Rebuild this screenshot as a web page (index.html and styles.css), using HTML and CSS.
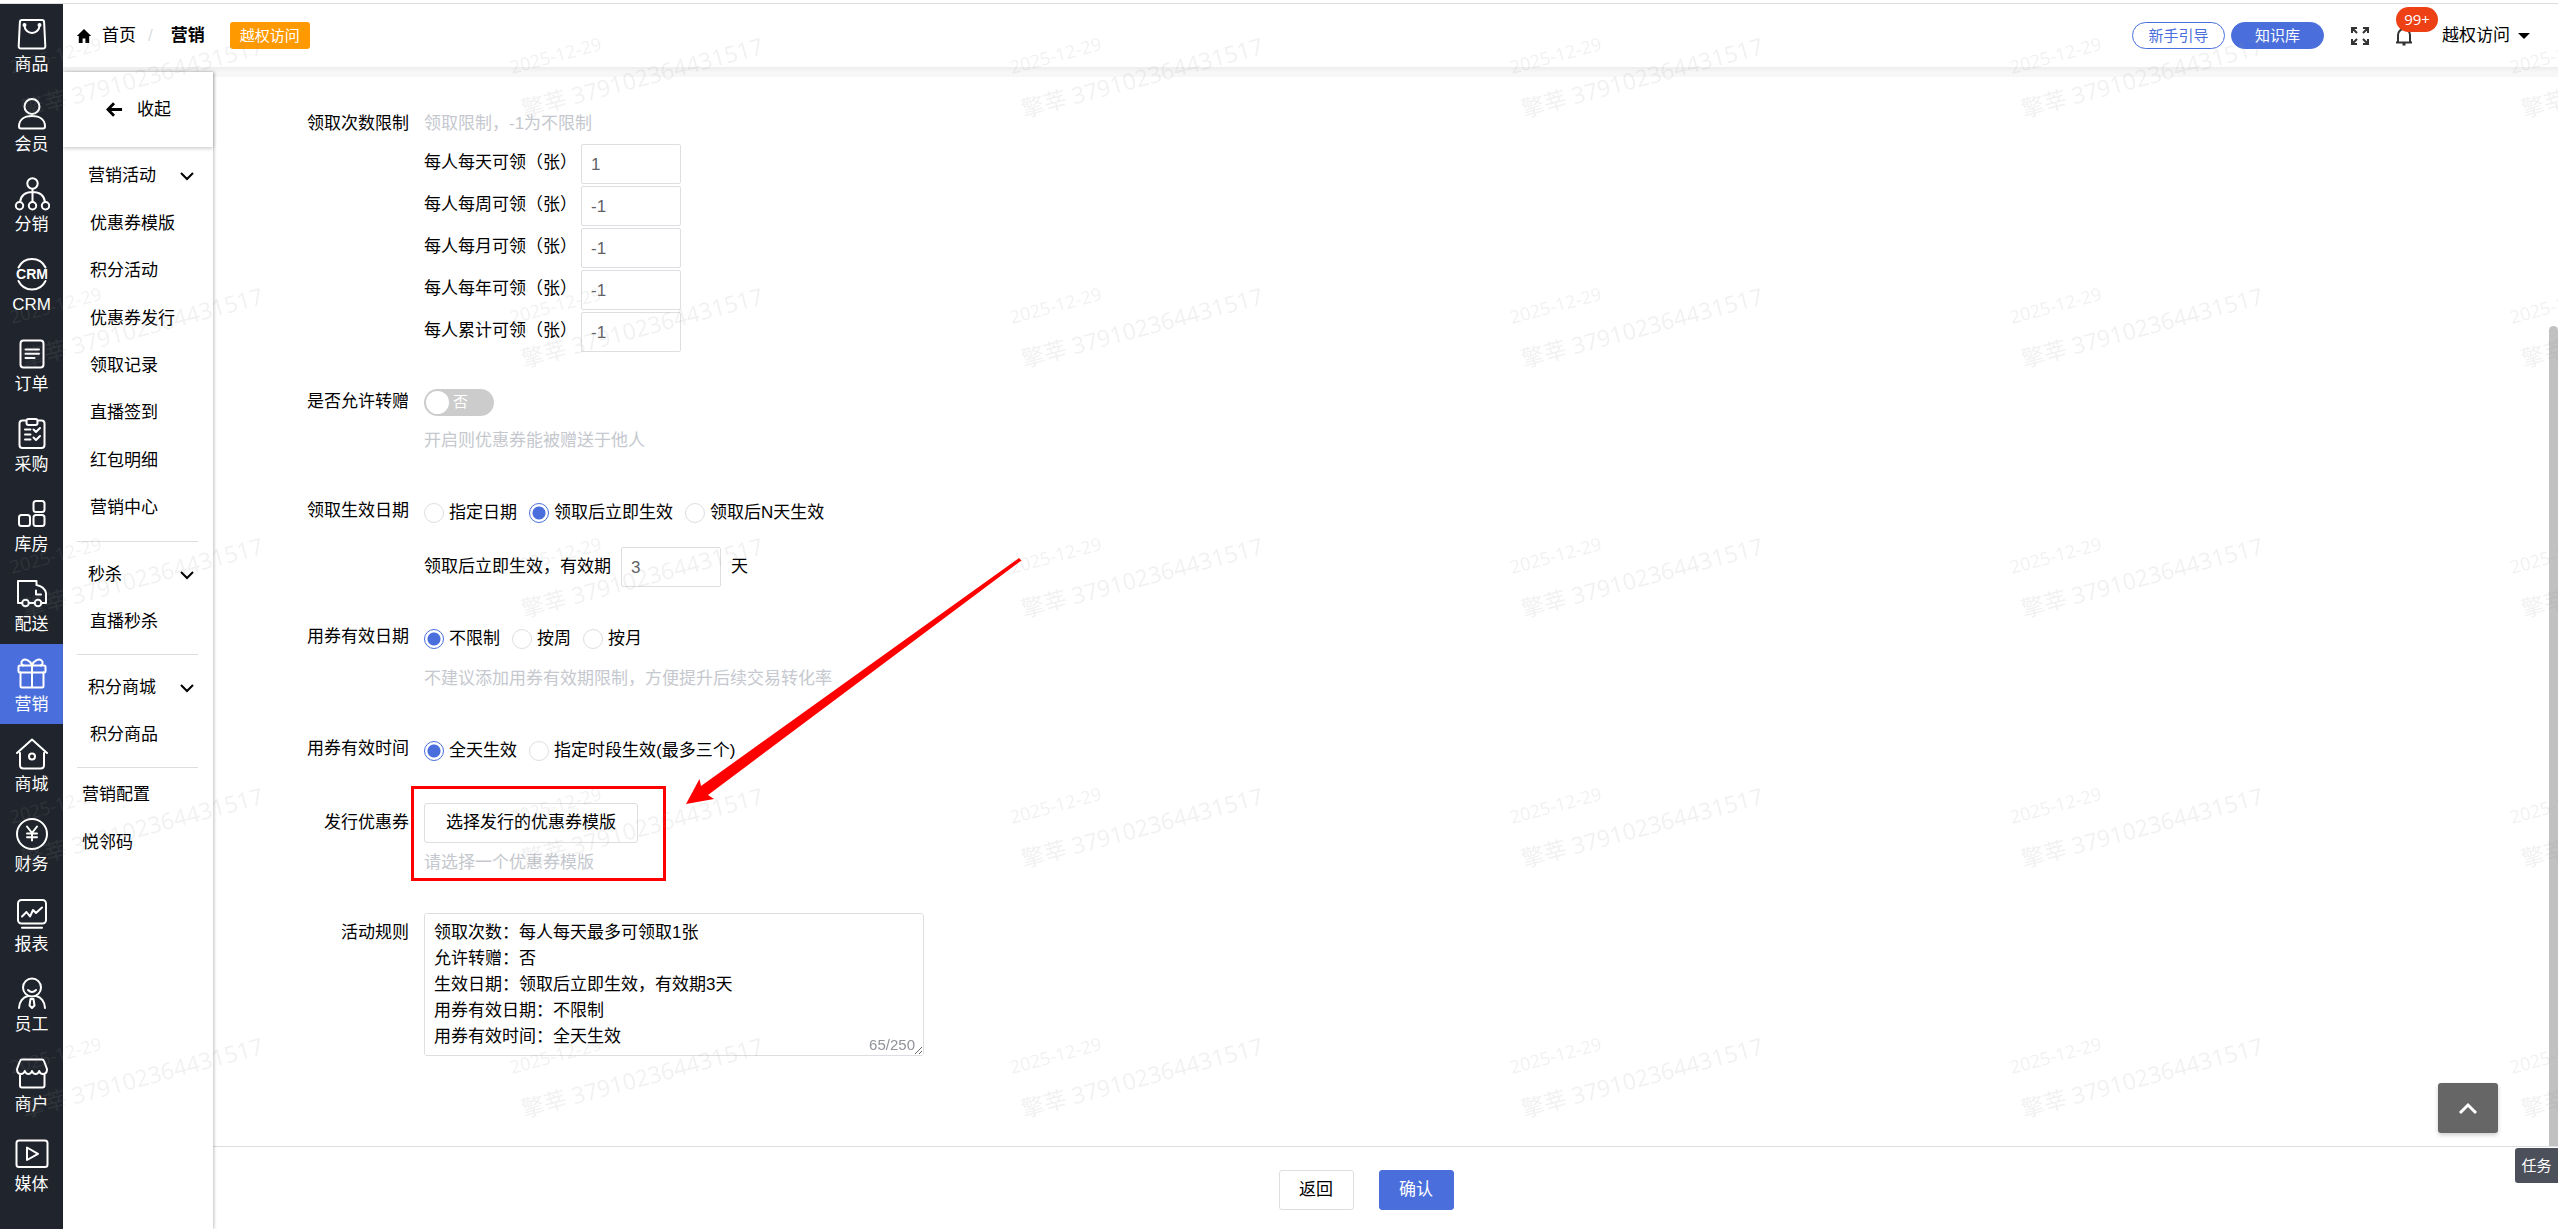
FILE: index.html
```html
<!DOCTYPE html>
<html lang="zh-CN">
<head>
<meta charset="utf-8">
<meta name="viewport" content="width=device-width, initial-scale=1">
<title>营销 - 优惠券发行</title>
<link rel="stylesheet" href="styles.css">
</head>
<body>
<div class="app">
  <nav class="rail" aria-label="主导航">
    <a class="rail-item" href="#"><svg class="rail-icon" viewBox="0 0 36 36"><path d="M8 4h20q2 0 2.100 2l1.200 24q.1 2.500-2.300 2.500H7Q4.600 32.500 4.700 30L5.900 6Q6 4 8 4z"/><path d="M10.500 9.500a7.500 7.500 0 0 0 15 0"/><circle class="solid" cx="10.500" cy="9" r="1"/><circle class="solid" cx="25.500" cy="9" r="1"/></svg>商品</a>
    <a class="rail-item" href="#"><svg class="rail-icon" viewBox="0 0 36 36"><circle cx="18" cy="10.500" r="7.500"/><path d="M5 30.500C5 24 10 20 18 20s13 4 13 10.500q0 2-2 2H7q-2 0-2-2z"/></svg>会员</a>
    <a class="rail-item" href="#"><svg class="rail-icon" viewBox="0 0 36 36"><circle cx="18.500" cy="7.500" r="5.200"/><circle cx="5.500" cy="29.700" r="3.700"/><circle cx="18.500" cy="29.700" r="3.700"/><circle cx="31.500" cy="29.700" r="3.700"/><path d="M18.500 13v13M6 26c1-7 6-10 12.500-10S30 19 31 26"/></svg>分销</a>
    <a class="rail-item" href="#"><svg class="rail-icon" viewBox="0 0 36 36"><path d="M4.500 11.500a15 15 0 0 1 27 0M4.500 25a15 15 0 0 0 27 0"/><text class="icon-word" x="18" y="23" text-anchor="middle">CRM</text></svg>CRM</a>
    <a class="rail-item" href="#"><svg class="rail-icon" viewBox="0 0 36 36"><rect x="6.500" y="4.500" width="23" height="27" rx="3"/><path d="M11.500 13.500h13.500M11.500 17.700h13.500M11.500 22h9"/></svg>订单</a>
    <a class="rail-item" href="#"><svg class="rail-icon" viewBox="0 0 36 36"><path d="M12 4.500H8.500q-3 0-3 3V29q0 3 3 3h19q3 0 3-3V7.500q0-3-3-3H24"/><rect x="12.500" y="3" width="11" height="6" rx="2"/><path d="M11 13.500h5.500M11 18.500h5.500M11 23.500h5.500M19.500 13.500l2.500 2.500 4-4M19.500 21.500l2.500 2.500 4-4"/></svg>采购</a>
    <a class="rail-item" href="#"><svg class="rail-icon" viewBox="0 0 36 36"><rect x="19.500" y="5" width="11" height="11" rx="2.500"/><rect x="5" y="19" width="11" height="11" rx="2.500"/><rect x="19.500" y="19" width="11" height="11" rx="2.500"/></svg>库房</a>
    <a class="rail-item" href="#"><svg class="rail-icon" viewBox="0 0 36 36"><path d="M8 27H4V5h18.500v4c5 1 8.500 4 9.500 8v10h-4.500M15 27h5.500"/><path d="M22 14.500v4h5"/><circle cx="11.500" cy="27" r="3.300"/><circle cx="24" cy="27" r="3.300"/></svg>配送</a>
    <a class="rail-item is-active" href="#" aria-current="page"><svg class="rail-icon" viewBox="0 0 36 36"><rect x="4.500" y="9.500" width="27" height="7" rx="1.500"/><path d="M6.500 16.500V30q0 1.500 1.500 1.500h20q1.500 0 1.500-1.500V16.500M18 9.500v22M18 9.500C16 4 11 2.500 8.500 4.500S8 9 9.500 9.500M18 9.500C20 4 25 2.500 27.500 4.500S28 9 26.500 9.500"/></svg>营销</a>
    <a class="rail-item" href="#"><svg class="rail-icon" viewBox="0 0 36 36"><path d="M3 17L18 3.500 33 17M6 17v12q0 3.500 3.500 3.500h17q3.500 0 3.500-3.500V17"/><circle cx="18" cy="20.500" r="3"/></svg>商城</a>
    <a class="rail-item" href="#"><svg class="rail-icon" viewBox="0 0 36 36"><circle cx="18" cy="18" r="15"/><path d="M13 10.500l5 6.500 5-6.500M18 17v7.500M13 17.500h10M13 21.300h10"/></svg>财务</a>
    <a class="rail-item" href="#"><svg class="rail-icon" viewBox="0 0 36 36"><rect x="4" y="4" width="28" height="23.500" rx="3.500"/><path d="M8 20.500l4.500-4.500 3.500 4.500 3-6.500 3 3 6-5.500M8 31.700h20"/></svg>报表</a>
    <a class="rail-item" href="#"><svg class="rail-icon" viewBox="0 0 36 36"><circle cx="18" cy="11.500" r="9"/><path d="M14 14q4 4 8 0M5 32c0-6 4-11 9-12M31 32c0-6-4-11-9-12M16.500 23h3l1 6.500-2.500 2.500-2.500-2.500z"/></svg>员工</a>
    <a class="rail-item" href="#"><svg class="rail-icon" viewBox="0 0 36 36"><path d="M8 3.500h20q1.500 0 2 1.500l3 8q0 5-4 5-3 0-3.800-3-1 3-3.600 3t-3.600-3q-1 3-3.600 3t-3.600-3q-1 3-3.800 3-4 0-4-5l3-8q.5-1.500 2-1.500zM6 18v11.500q0 2 2 2h20.500q2 0 2-2V18"/></svg>商户</a>
    <a class="rail-item" href="#"><svg class="rail-icon" viewBox="0 0 36 36"><rect x="2.500" y="4.500" width="31" height="26.500" rx="2.500"/><path d="M13 11.500v12.500l11-6.200z"/></svg>媒体</a>
  </nav>

  <div class="workspace">
    <header class="topbar">
      <div class="crumbs">
        <svg class="home-icon" viewBox="0 0 16 16"><path d="M8 1L.8 8h2v7h3.800v-4.500h2.800V15h3.800V8h2z"/></svg>
        <a href="#">首页</a>
        <span class="slash">/</span>
        <strong>营销</strong>
        <span class="tag">越权访问</span>
      </div>
      <div class="tools">
        <button class="pill" type="button">新手引导</button>
        <button class="pill pill-solid" type="button">知识库</button>
        <button class="icon-btn expand" type="button" aria-label="全屏"><svg viewBox="0 0 20 20"><path d="M2 7V2h5M2 2l5 5M13 2h5v5M18 2l-5 5M2 13v5h5M2 18l5-5M18 13v5h-5M18 18l-5-5"/></svg></button>
        <button class="icon-btn bell" type="button" aria-label="消息"><svg viewBox="0 0 20 20"><path d="M2 16.500h16M4 16V9a6 6 0 0 1 12 0v7M8.500 18.500h3"/></svg><span class="badge">99+</span></button>
        <button class="account" type="button">越权访问<span class="caret"></span></button>
      </div>
    </header>

    <div class="body">
      <aside class="side">
        <button class="collapse" type="button"><svg viewBox="0 0 18 18"><path d="M17 9H2M8.500 2.500L2 9l6.500 6.500"/></svg>收起</button>
        <section class="group">
          <button class="group-head" type="button">营销活动<svg viewBox="0 0 16 16"><path d="M2 5l6 6 6-6"/></svg></button>
          <ul class="links links-long">
            <li><a href="#">优惠券模版</a></li>
            <li><a href="#">积分活动</a></li>
            <li><a href="#">优惠券发行</a></li>
            <li><a href="#">领取记录</a></li>
            <li><a href="#">直播签到</a></li>
            <li><a href="#">红包明细</a></li>
            <li><a href="#">营销中心</a></li>
          </ul>
        </section>
        <section class="group">
          <button class="group-head" type="button">秒杀<svg viewBox="0 0 16 16"><path d="M2 5l6 6 6-6"/></svg></button>
          <ul class="links"><li><a href="#">直播秒杀</a></li></ul>
        </section>
        <section class="group">
          <button class="group-head" type="button">积分商城<svg viewBox="0 0 16 16"><path d="M2 5l6 6 6-6"/></svg></button>
          <ul class="links"><li><a href="#">积分商品</a></li></ul>
        </section>
        <ul class="links plain">
          <li><a href="#">营销配置</a></li>
          <li><a href="#">悦邻码</a></li>
        </ul>
      </aside>

      <main class="main">
        <form class="form">
          <div class="field">
            <span class="label">领取次数限制</span>
            <div class="control">
              <p class="hint">领取限制，-1为不限制</p>
              <div class="limits">
                <label for="day">每人每天可领（张）</label><input id="day" class="box" type="text" value="1">
                <label for="week">每人每周可领（张）</label><input id="week" class="box" type="text" value="-1">
                <label for="month">每人每月可领（张）</label><input id="month" class="box" type="text" value="-1">
                <label for="year">每人每年可领（张）</label><input id="year" class="box" type="text" value="-1">
                <label for="total">每人累计可领（张）</label><input id="total" class="box" type="text" value="-1">
              </div>
            </div>
          </div>

          <div class="field wide-gap">
            <label class="label" for="gift">是否允许转赠</label>
            <div class="control">
              <span class="switch"><input id="gift" type="checkbox" role="switch"><span class="switch-text">否</span></span>
              <p class="hint">开启则优惠券能被赠送于他人</p>
            </div>
          </div>

          <div class="field">
            <span class="label">领取生效日期</span>
            <div class="control">
              <div class="radios">
                <label><input type="radio" name="start">指定日期</label>
                <label><input type="radio" name="start" checked>领取后立即生效</label>
                <label><input type="radio" name="start">领取后N天生效</label>
              </div>
              <div class="inline">
                <label for="days">领取后立即生效，有效期</label>
                <input id="days" class="box" type="text" value="3">
                <span class="unit">天</span>
              </div>
            </div>
          </div>

          <div class="field wide-gap">
            <span class="label">用券有效日期</span>
            <div class="control">
              <div class="radios">
                <label><input type="radio" name="date" checked>不限制</label>
                <label><input type="radio" name="date">按周</label>
                <label><input type="radio" name="date">按月</label>
              </div>
              <p class="hint">不建议添加用券有效期限制，方便提升后续交易转化率</p>
            </div>
          </div>

          <div class="field">
            <span class="label">用券有效时间</span>
            <div class="control">
              <div class="radios">
                <label><input type="radio" name="time" checked>全天生效</label>
                <label><input type="radio" name="time">指定时段生效(最多三个)</label>
              </div>
            </div>
          </div>

          <div class="field tall">
            <span class="label">发行优惠券</span>
            <div class="control">
              <button class="btn pick" type="button">选择发行的优惠券模版</button>
              <p class="hint">请选择一个优惠券模版</p>
              <svg class="callout" viewBox="0 0 620 340" aria-hidden="true"><rect x="3.500" y="230.500" width="252" height="92"/><path d="M610 1L612.500 3.500 299 238 305 242 277 247 290.500 222 292 229z"/></svg>
            </div>
          </div>

          <div class="field tall">
            <label class="label" for="rules">活动规则</label>
            <div class="control rules">
              <textarea id="rules">领取次数：每人每天最多可领取1张
允许转赠：否
生效日期：领取后立即生效，有效期3天
用券有效日期：不限制
用券有效时间：全天生效</textarea>
              <span class="count">65/250</span>
            </div>
          </div>
        </form>
        <footer class="actions">
          <button class="btn" type="button">返回</button>
          <button class="btn btn-primary" type="submit">确认</button>
        </footer>
        <span class="thumb"></span>
        <button class="to-top" type="button" aria-label="回到顶部"><svg viewBox="0 0 20 20"><path d="M2 14l8-8 8 8"/></svg></button>
        <button class="task" type="button">任务</button>
      </main>
    </div>
  </div>
</div>

<svg class="watermark" aria-hidden="true">
  <defs>
    <pattern id="mark" width="500" height="250" patternUnits="userSpaceOnUse">
      <text class="mark-date" transform="translate(12 74) rotate(-15)">2025-12-29</text>
      <text class="mark-name" transform="translate(24 118) rotate(-15)">擎莘 379102364431517</text>
    </pattern>
  </defs>
  <rect width="100%" height="100%" fill="url(#mark)"/>
</svg>
</body>
</html>
```
FILE: styles.css
```css
:root {
  --blue: #4a6fdc;
  --rail: #20242c;
  --line: #dcdee2;
  --hint: #c5c8ce;
  --ink: #000;
}

* { box-sizing: border-box; }

body {
  margin: 0;
  padding-top: 3px;
  background: #fff;
  color: var(--ink);
  font: 17px/26px "Liberation Sans", "Noto Sans CJK SC", sans-serif;
}

a { color: inherit; text-decoration: none; }
p, ul { margin: 0; padding: 0; }
ul { list-style: none; }
button, input, textarea { font: inherit; color: inherit; }
button { padding: 0; border: 0; background: none; cursor: pointer; }
svg { fill: none; stroke: currentColor; }

.app {
  display: flex;
  height: calc(100vh - 3px);
  border-top: 1px solid #ddd;
  overflow: hidden;
}

/* Dark icon rail */
.rail {
  flex: 0 0 63px;
  background: var(--rail);
  color: #fff;
}
.rail-item {
  display: flex;
  flex-direction: column;
  align-items: center;
  height: 80px;
  padding-top: 12px;
}
.rail-item.is-active { background: var(--blue); }
.rail-icon {
  flex: none;
  width: 36px;
  height: 36px;
  stroke-width: 2;
  stroke-linecap: round;
  stroke-linejoin: round;
}
.solid { fill: currentColor; }
.icon-word {
  fill: currentColor;
  stroke: none;
  font-size: 14px;
  font-weight: bold;
}

.workspace {
  flex: 1;
  min-width: 0;
  display: flex;
  flex-direction: column;
}

/* Top bar */
.topbar {
  position: relative;
  flex: 0 0 63px;
  display: flex;
  justify-content: space-between;
  align-items: center;
  padding: 0 28px 0 13px;
  background: #fff;
}
.crumbs, .tools { display: flex; align-items: center; }
.home-icon {
  width: 16px;
  height: 16px;
  margin-right: 10px;
  fill: currentColor;
  stroke: none;
}
.slash { margin: 0 18px 0 12px; color: var(--line); }
.tag {
  margin-left: 25px;
  padding: 0 10px;
  border-radius: 3px;
  background: #f90;
  color: #fff;
  font-size: 15px;
  line-height: 27px;
}
.tools { gap: 6px; }
.pill {
  width: 93px;
  height: 27px;
  border: 1px solid var(--blue);
  border-radius: 14px;
  color: var(--blue);
  font-size: 15px;
  line-height: 24px;
}
.pill-solid { background: var(--blue); color: #fff; }
.icon-btn {
  position: relative;
  width: 20px;
  height: 20px;
  color: #333;
}
.icon-btn svg { display: block; stroke-width: 2; }
.expand { margin: 0 18px 0 20px; }
.badge {
  position: absolute;
  left: 2px;
  top: -19px;
  width: 42px;
  border-radius: 13px;
  background: #ed4014;
  color: #fff;
  font: 15px/25px "Open Sans", sans-serif;
}
.account {
  display: flex;
  align-items: center;
  gap: 8px;
  margin-left: 22px;
}
.caret {
  border: 6px solid transparent;
  border-top-color: #000;
  border-bottom: 0;
}

.body {
  flex: 1;
  min-height: 0;
  display: flex;
  background: linear-gradient(#ededed, #f7f7f7 5px);
}

/* Secondary menu */
.side {
  position: relative;
  z-index: 1;
  flex: 0 0 150px;
  margin-top: 5px;
  background: #fff;
  box-shadow: 1px 0 3px rgba(0, 0, 0, .25);
}
.collapse {
  display: flex;
  align-items: center;
  gap: 14px;
  width: 100%;
  height: 75px;
  margin-bottom: 5px;
  padding-left: 43px;
  box-shadow: 0 1px 4px rgba(0, 0, 0, .25);
}
.collapse svg { width: 17px; stroke-width: 3; }
.group::after {
  content: "";
  display: block;
  margin: 9px 15px 9px 14px;
  border-top: 1px solid var(--line);
}
.group-head {
  display: flex;
  justify-content: space-between;
  align-items: center;
  width: 100%;
  height: 48px;
  padding: 0 18px 0 25px;
}
.group-head svg { width: 16px; stroke-width: 2; }
.links { padding-left: 27px; line-height: 46px; }
.links-long {
  display: grid;
  grid-auto-rows: 1fr;
  align-items: center;
  min-height: 332px;
}
.plain {
  margin-top: -6px;
  padding-left: 19px;
  line-height: 48px;
}

/* Form area */
.main {
  position: relative;
  flex: 1;
  min-width: 0;
  display: flex;
  flex-direction: column;
  margin-top: 10px;
  background: #fff;
}
.form { flex: 1; min-height: 0; padding-top: 34px; }
.field {
  display: grid;
  grid-template-columns: 196px 1fr;
  column-gap: 15px;
  margin-bottom: 37px;
}
.wide-gap { margin-bottom: 44px; }
.label { text-align: right; }
.tall .label { padding-top: 7px; }
.control { position: relative; }
.hint { color: var(--hint); }
.radios + .hint, .switch + .hint { margin-top: 12px; }
.pick + .hint { margin-top: 7px; }

.limits {
  display: grid;
  grid-template-columns: 157px 100px;
  row-gap: 2px;
  margin-top: 7px;
  line-height: 38px;
}
.box {
  width: 100px;
  height: 40px;
  padding: 2px 9px 0;
  border: 1px solid var(--line);
  border-radius: 2px;
  background: #fff;
  color: #606266;
}

.switch {
  position: relative;
  display: block;
  width: 70px;
  height: 27px;
}
.switch input {
  appearance: none;
  display: block;
  width: 70px;
  height: 27px;
  margin: 0;
  padding: 2px;
  border-radius: 14px;
  background: #ccc;
}
.switch input::before {
  content: "";
  display: block;
  width: 23px;
  height: 23px;
  border-radius: 50%;
  background: #fff;
}
.switch-text {
  position: absolute;
  left: 29px;
  top: 0;
  color: #fff;
  font-size: 15px;
  pointer-events: none;
}

.radios { display: flex; gap: 12px; }
.radios label {
  display: flex;
  align-items: center;
  gap: 5px;
  height: 30px;
}
.radios input {
  appearance: none;
  width: 20px;
  height: 20px;
  margin: 0;
  border: 1px solid var(--line);
  border-radius: 50%;
}
.radios input:checked {
  border-color: var(--blue);
  background: radial-gradient(circle, var(--blue) 6px, transparent 7px);
}
.inline {
  display: flex;
  align-items: center;
  margin-top: 19px;
}
.inline .box { margin: 0 10px; }

.btn {
  height: 40px;
  padding: 0 19px;
  border: 1px solid var(--line);
  border-radius: 3px;
}
.btn-primary {
  border-color: var(--blue);
  background: var(--blue);
  color: #fff;
}
.pick { display: block; min-width: 214px; }

/* Red box and arrow drawn over the picker */
.callout {
  position: absolute;
  left: -15px;
  top: -246px;
  width: 620px;
  height: 340px;
  stroke: red;
  stroke-width: 3;
  pointer-events: none;
}
.callout path { fill: red; stroke: none; }

.rules { width: 500px; max-width: 100%; }
.rules textarea {
  display: block;
  width: 100%;
  height: 143px;
  padding: 6px 9px;
  border: 1px solid var(--line);
  border-radius: 3px;
  background: #fff;
  resize: vertical;
}
.count {
  position: absolute;
  right: 9px;
  bottom: -2px;
  color: #909399;
  font-size: 15px;
}

.actions {
  flex: 0 0 83px;
  display: flex;
  justify-content: center;
  align-items: center;
  gap: 25px;
  padding: 4px 39px 0 0;
  border-top: 1px solid var(--line);
}
.actions .btn { width: 75px; }

/* Floating controls */
.thumb {
  position: absolute;
  right: 0;
  top: 249px;
  bottom: 83px;
  width: 9px;
  border-radius: 5px 5px 0 0;
  background: #c1c1c1;
}
.to-top {
  position: absolute;
  right: 60px;
  bottom: 96px;
  width: 60px;
  height: 50px;
  border-radius: 3px;
  background: #666;
  color: #fff;
  box-shadow: 0 2px 4px rgba(0, 0, 0, .2);
}
.to-top svg { width: 20px; stroke-width: 3; vertical-align: middle; }
.task {
  position: absolute;
  right: 0;
  bottom: 46px;
  width: 43px;
  height: 35px;
  border-radius: 3px 0 0 3px;
  background: #4b505b;
  color: #fff;
  font-size: 15px;
}

.watermark {
  position: fixed;
  inset: 0;
  z-index: 2;
  width: 100%;
  height: 100%;
  stroke: none;
  pointer-events: none;
}
.watermark text {
  fill: rgba(150, 150, 150, .13);
  font-family: "Open Sans", "Noto Sans CJK SC", sans-serif;
}
.mark-date { font-size: 18px; }
.mark-name { font-size: 23px; }
```
